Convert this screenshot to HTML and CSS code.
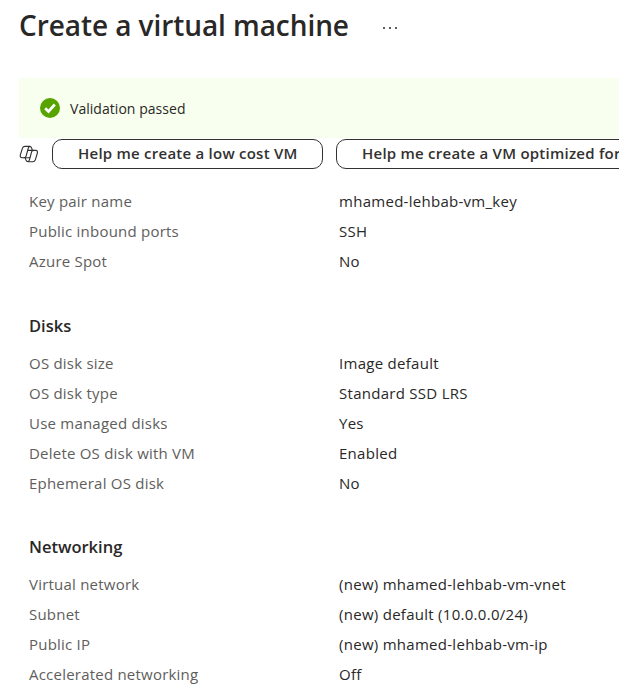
FILE: index.html
```html
<!DOCTYPE html>
<html lang="en">
<head>
<meta charset="utf-8">
<title>Create a virtual machine</title>
<link rel="stylesheet" href="styles.css">
</head>
<body>
<header class="page-header">
  <h1 class="title">Create a virtual machine</h1>
  <span class="more"><i></i><i></i><i></i></span>
</header>
<div class="banner">
  <svg class="check" viewBox="0 0 20 20"><circle cx="10" cy="10" r="10" fill="#57a300"/><path d="M5.2 10.2 8.5 13.5 14.8 6.5" fill="none" stroke="#fff" stroke-width="2.7"/></svg>
  <span class="banner-text">Validation passed</span>
</div>
<div class="suggestions">
  <svg class="copilot" viewBox="0 0 20 18" fill="none" stroke="#323130" stroke-width="1.15" stroke-linejoin="round" stroke-linecap="round">
    <path d="M13.2 5.2 12.7 3.1Q12.1 1.3 10.4 1.3H6Q4.1 1.3 3.5 3.1L1.4 9.7Q.6 12.7 3.2 12.7H5Q6.6 12.7 7.1 11.1L9.3 3.1Q9.8 1.3 11 1.4"/>
    <path d="M6.2 12.6 6.9 14.9Q7.5 16.7 9.2 16.7H13.8Q15.7 16.7 16.3 14.9L18.3 8.3Q19.1 5.3 16.5 5.3H14.7Q13.1 5.3 12.6 6.9L10.4 14.9Q9.9 16.7 8.8 16.6"/>
    <path d="M8.8 5.3H14.7M5 12.7H10.9"/>
  </svg>
  <button class="pill pill-cost">Help me create a low cost VM</button>
  <button class="pill pill-optimized">Help me create a VM optimized for</button>
</div>
<main class="summary">
  <dl class="rows rows-basics">
    <dt>Key pair name</dt><dd>mhamed-lehbab-vm_key</dd>
    <dt>Public inbound ports</dt><dd>SSH</dd>
    <dt>Azure Spot</dt><dd>No</dd>
  </dl>
  <h2 class="section">Disks</h2>
  <dl class="rows">
    <dt>OS disk size</dt><dd>Image default</dd>
    <dt>OS disk type</dt><dd>Standard SSD LRS</dd>
    <dt>Use managed disks</dt><dd>Yes</dd>
    <dt>Delete OS disk with VM</dt><dd>Enabled</dd>
    <dt>Ephemeral OS disk</dt><dd>No</dd>
  </dl>
  <h2 class="section">Networking</h2>
  <dl class="rows">
    <dt>Virtual network</dt><dd>(new) mhamed-lehbab-vm-vnet</dd>
    <dt>Subnet</dt><dd>(new) default (10.0.0.0/24)</dd>
    <dt>Public IP</dt><dd>(new) mhamed-lehbab-vm-ip</dd>
    <dt>Accelerated networking</dt><dd>Off</dd>
  </dl>
</main>
</body>
</html>
```
FILE: styles.css
```css
* { box-sizing: border-box; }
body {
  margin: 0;
  height: 694px;
  overflow: hidden;
  background: #fff;
  color: #292827;
  font-family: "Segoe UI", "Open Sans", "Noto Sans", sans-serif;
  font-size: 15px;
}
.page-header { display: flex; height: 78px; padding-left: 19px; }
.title { margin: 0; width: 364px; font-size: 28px; font-weight: 570; line-height: 50px; letter-spacing: -0.07px; white-space: nowrap; }
.more { display: flex; gap: 4px; padding-top: 27px; }
.more i { width: 2px; height: 1.5px; background: #605e5c; }
.banner { display: flex; align-items: center; height: 60px; margin-left: 19px; padding-left: 21px; background: #f8ffef; }
.check { width: 20px; height: 20px; margin-right: 10px; }
.banner-text { padding-top: 2px; font-size: 14px; line-height: 20px; letter-spacing: 0.04px; }
.suggestions { display: flex; align-items: center; height: 32px; padding-left: 19px; overflow: hidden; }
.copilot { flex: none; width: 20px; height: 18px; margin-right: 13px; }
.pill {
  flex: none;
  height: 30px;
  padding: 0 25px 2px;
  border: 1px solid #323130;
  border-radius: 10px;
  background: #fff;
  color: #323130;
  font: 570 15px/26px "Segoe UI", "Open Sans", "Noto Sans", sans-serif;
  letter-spacing: 0.24px;
  text-align: left;
  white-space: nowrap;
}
.pill-cost { width: 271px; margin-right: 13px; }
.pill-optimized { width: 420px; }
.summary { padding: 16px 0 0 29px; }
.rows { display: grid; grid-template-columns: 310px 1fr; grid-auto-rows: 30px; margin: 0; line-height: 30px; white-space: nowrap; }
.rows-basics { padding-bottom: 1px; }
.rows dt { color: #605e5c; letter-spacing: 0.22px; }
.rows dd { margin: 0; letter-spacing: 0.28px; }
.section { margin: 34px 0 7px; font-size: 16.5px; font-weight: 570; line-height: 30px; }
```
